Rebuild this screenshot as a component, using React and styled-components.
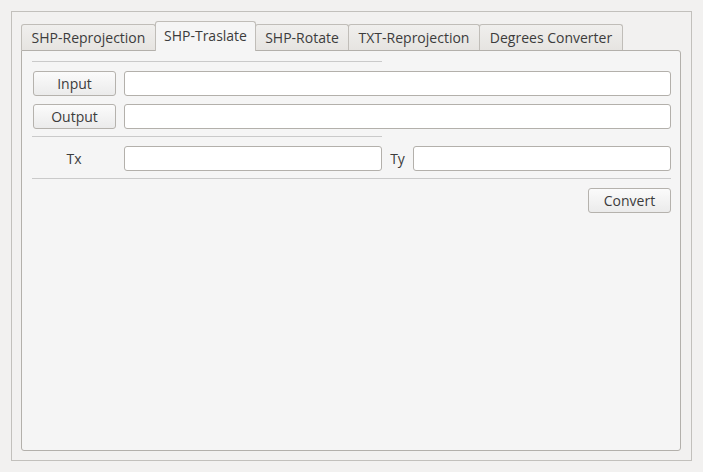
import React, { useState } from "react";
import styled, { createGlobalStyle } from "styled-components";

const GlobalStyle = createGlobalStyle`
  html, body {
    margin: 0;
    padding: 0;
    background: #f2f1f0;
  }
  body {
    font-family: "Open Sans", "DejaVu Sans", sans-serif;
    font-size: 14px;
    color: #3c3c3c;
  }
`;

const TABS = [
  { label: "SHP-Reprojection", w: 135 },
  { label: "SHP-Traslate", w: 101 },
  { label: "SHP-Rotate", w: 94 },
  { label: "TXT-Reprojection", w: 132 },
  { label: "Degrees Converter", w: 144 },
];

const Window = styled.div`
  box-sizing: border-box;
  margin: 11px 0 0 11px;
  width: 681px;
  height: 450px;
  border: 1px solid #c2c0bc;
  padding: 9px 10px 9px 9px;
  display: flex;
  flex-direction: column;
`;

const TabBar = styled.div`
  display: flex;
  align-items: flex-end;
  height: 29px;
`;

const Tab = styled.div`
  box-sizing: border-box;
  width: ${(p) => p.$w}px;
  margin-left: -1px;
  &:first-child {
    margin-left: 0;
  }
  display: flex;
  align-items: center;
  justify-content: center;
  border: 1px solid #c0bdb8;
  border-bottom: none;
  border-radius: 3px 3px 0 0;
  cursor: default;
  white-space: nowrap;
  height: ${(p) => (p.$active ? 30 : 26)}px;
  margin-bottom: ${(p) => (p.$active ? -1 : 0)}px;
  padding-bottom: ${(p) => (p.$active ? 3 : 0)}px;
  background: ${(p) =>
    p.$active ? "#f5f5f5" : "linear-gradient(#f0efed, #e6e4e1)"};
  position: ${(p) => (p.$active ? "relative" : "static")};
  z-index: ${(p) => (p.$active ? 1 : 0)};
`;

const Pane = styled.div`
  flex: 1;
  box-sizing: border-box;
  background: #f5f5f5;
  border: 1px solid #b3b0ab;
  border-radius: 0 3px 3px 3px;
  padding: 11px 9px 0 10px;
`;

const Form = styled.div`
  display: grid;
  grid-template-columns: 84px 1fr auto 1fr;
  column-gap: 8px;
  row-gap: 8px;
  align-items: center;
`;

const Separator = styled.div`
  grid-column: ${(p) => (p.$full ? "1 / -1" : "1 / 3")};
  height: 3px;
  margin-top: -2px;
  background: linear-gradient(
    transparent 1px,
    #cacaca 1px,
    #cacaca 2px,
    transparent 2px
  );
`;

const Button = styled.button`
  box-sizing: border-box;
  height: 25px;
  width: ${(p) => (p.$w ? `${p.$w}px` : "calc(100% - 1px)")};
  justify-self: end;
  grid-column: ${(p) => p.$col || "1"};
  border: 1px solid #b5b2ad;
  border-radius: 3px;
  background: linear-gradient(#fbfbfb, #ebebeb);
  font-family: inherit;
  font-size: 14px;
  color: #3c3c3c;
  padding: 0;
`;

const Field = styled.input`
  box-sizing: border-box;
  height: 25px;
  width: 100%;
  grid-column: ${(p) => p.$span || "auto"};
  border: 1px solid #b3b0ab;
  border-radius: 3px;
  background: #fff;
  font-family: inherit;
  font-size: 14px;
  padding: 0 5px;
  outline: none;
`;

const Label = styled.span`
  grid-column: ${(p) => p.$col || "auto"};
  text-align: ${(p) => p.$align || "center"};
  white-space: nowrap;
`;

export default function App() {
  const [active, setActive] = useState(1);

  return (
    <>
      <GlobalStyle />
      <Window>
        <TabBar>
          {TABS.map((t, i) => (
            <Tab
              key={t.label}
              $w={t.w}
              $active={i === active}
              onClick={() => setActive(i)}
            >
              {t.label}
            </Tab>
          ))}
        </TabBar>
        <Pane>
          <Form>
            <Separator />
            <Button>Input</Button>
            <Field $span="2 / 5" />
            <Button>Output</Button>
            <Field $span="2 / 5" />
            <Separator />
            <Label $col="1">Tx</Label>
            <Field />
            <Label $align="left">Ty</Label>
            <Field />
            <Separator $full />
            <Button $col="4" $w={83}>
              Convert
            </Button>
          </Form>
        </Pane>
      </Window>
    </>
  );
}
